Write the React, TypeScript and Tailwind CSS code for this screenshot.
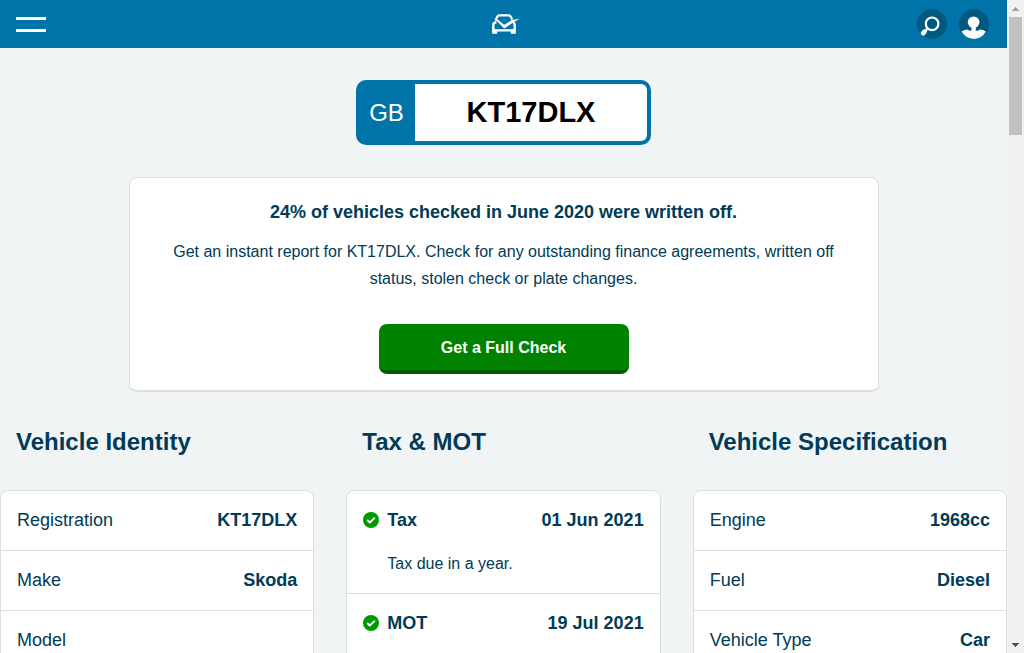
import type { ReactNode } from "react";

type Item = { label: string; value: string; ok?: boolean; note?: string };

const identity: Item[] = [
  { label: "Registration", value: "KT17DLX" },
  { label: "Make", value: "Skoda" },
  { label: "Model", value: "" },
];

const taxAndMot: Item[] = [
  { label: "Tax", value: "01 Jun 2021", ok: true, note: "Tax due in a year." },
  { label: "MOT", value: "19 Jul 2021", ok: true },
];

const specification: Item[] = [
  { label: "Engine", value: "1968cc" },
  { label: "Fuel", value: "Diesel" },
  { label: "Vehicle Type", value: "Car" },
];

function CarLogo() {
  return (
    <svg width="28" height="20" viewBox="0 0 28 20" fill="none" aria-hidden="true">
      <path
        d="M3.6 6.5 5.2 2.7Q5.8 1.4 7.2 1.4h9.6q1.4 0 2 1.3l1.4 3"
        stroke="white"
        strokeWidth="2.2"
      />
      <path
        d="M4.4 8Q1.3 8.8 1.3 10.8v5.6h21.4v-5.6q0-1.8-1.6-2.6"
        stroke="white"
        strokeWidth="2.4"
      />
      <path d="M.2 15.5h5v4.2h-5zM18.8 15.5h5v4.2h-5z" fill="white" />
      <path d="M2.4 4.8 5.6 5.6 12.2 10.8 20 6 27.6 4.8 20.8 8.8 12.2 14.6Z" fill="white" />
    </svg>
  );
}

function SearchIcon() {
  return (
    <svg width="30" height="30" viewBox="0 0 30 30" fill="none" aria-hidden="true">
      <circle cx="15.1" cy="14.8" r="6.3" stroke="white" strokeWidth="2.2" />
      <path d="m10.8 19.4-3 3" stroke="white" strokeWidth="2.4" />
      <path d="m7.6 22.6-1.6 1.8" stroke="white" strokeWidth="4.6" strokeLinecap="round" />
    </svg>
  );
}

function UserIcon() {
  return (
    <svg width="30" height="30" viewBox="0 0 30 30" fill="white" aria-hidden="true">
      <circle cx="14.6" cy="13.2" r="5.8" />
      <path d="M12.4 18h4.4v3.8q2.6.2 4-1.3 3.6.1 6 1.9Q22.8 30 14.7 30T2.6 22.4q2.4-1.8 6-1.9 1.4 1.5 3.8 1.3Z" />
    </svg>
  );
}

function TickIcon() {
  return (
    <svg width="16" height="16" viewBox="0 0 16 16" fill="none" aria-hidden="true">
      <circle cx="8" cy="8" r="8" fill="#009900" />
      <path d="m4.2 8 2.6 2.4 5-4.6" stroke="white" strokeWidth="1.9" />
    </svg>
  );
}

function Section({ title, items }: { title: string; items: Item[] }) {
  return (
    <section className="flex flex-col">
      <h2 className="px-4 text-2xl font-bold">{title}</h2>
      <dl className="mt-8 flex-1 divide-y divide-[#dedede] rounded-lg border border-[#dedede] bg-white pb-8">
        {items.map((item) => (
          <div key={item.label} className="px-4">
            <div className="flex items-center justify-between pt-[15px] pb-4 text-lg">
              <dt className={item.ok ? "flex items-center gap-2 font-bold" : ""}>
                {item.ok && <TickIcon />}
                {item.label}
              </dt>
              <dd className="font-bold">{item.value}</dd>
            </div>
            {item.note && <dd className="pt-[2px] pb-[17px] pl-6 leading-6">{item.note}</dd>}
          </div>
        ))}
      </dl>
    </section>
  );
}

function RoundButton({ label, children }: { label: string; children: ReactNode }) {
  return (
    <button
      type="button"
      aria-label={label}
      className="size-[30px] overflow-hidden rounded-full bg-[#005a80]"
    >
      {children}
    </button>
  );
}

function Scrollbar() {
  return (
    <div className="flex w-[17px] shrink-0 flex-col items-center bg-[#f1f1f1]" aria-hidden="true">
      <div className="flex h-[17px] items-center">
        <svg width="7" height="4" viewBox="0 0 7 4" fill="#a3a3a3">
          <path d="M3 0h1v1h1v1h1v1h1v1H0V3h1V2h1V1h1Z" />
        </svg>
      </div>
      <div className="h-[118px] w-[13px] bg-[#c1c1c1]" />
      <div className="mt-auto flex h-[17px] items-center">
        <svg width="7" height="4" viewBox="0 0 7 4" fill="#505050">
          <path d="M0 0h7v1H6v1H5v1H4v1H3V3H2V2H1V1H0Z" />
        </svg>
      </div>
    </div>
  );
}

export default function App() {
  return (
    <div className="flex h-screen overflow-hidden bg-[#f0f4f5] font-['Liberation_Sans',Arial,sans-serif] text-[#003b57]">
      <div className="min-w-0 flex-1 overflow-hidden">
        <header className="grid h-12 grid-cols-3 items-center bg-[#0074a8] px-4">
          <button type="button" aria-label="Menu" className="flex w-[30px] flex-col gap-[9px]">
            <span className="h-[3px] w-full bg-white" />
            <span className="h-[3px] w-full bg-white" />
          </button>
          <a href="#" aria-label="Home" className="justify-self-center pl-1">
            <CarLogo />
          </a>
          <div className="flex gap-3 justify-self-end pr-[2px]">
            <RoundButton label="Search">
              <SearchIcon />
            </RoundButton>
            <RoundButton label="Account">
              <UserIcon />
            </RoundButton>
          </div>
        </header>

        <main className="pt-8">
          <div className="mx-auto flex h-[65px] w-[295px] overflow-hidden rounded-[10px] bg-[#0074a8] p-1">
            <span className="flex w-[55px] items-center justify-center pr-[2px] text-2xl text-white">
              GB
            </span>
            <input
              aria-label="Registration number"
              defaultValue="KT17DLX"
              className="min-w-0 flex-1 rounded-r-md bg-white text-center text-[29px] font-bold text-black outline-none"
            />
          </div>

          <section className="mx-auto mt-8 max-w-[750px] rounded-lg border border-b-2 border-[#dedede] bg-white px-8 pt-5 pb-4 text-center">
            <h1 className="text-lg font-bold">
              24% of vehicles checked in June 2020 were written off.
            </h1>
            <p className="mt-3 leading-[27px]">
              Get an instant report for KT17DLX. Check for any outstanding finance agreements,
              written off status, stolen check or plate changes.
            </p>
            <button
              type="button"
              className="mt-8 h-[50px] w-[250px] rounded-lg border-b-4 border-[#005a00] bg-[#008200] pt-[2px] font-bold text-white"
            >
              Get a Full Check
            </button>
          </section>

          <div className="mt-[34px] grid grid-cols-3 gap-8">
            <Section title="Vehicle Identity" items={identity} />
            <Section title="Tax &amp; MOT" items={taxAndMot} />
            <Section title="Vehicle Specification" items={specification} />
          </div>
        </main>
      </div>
      <Scrollbar />
    </div>
  );
}
